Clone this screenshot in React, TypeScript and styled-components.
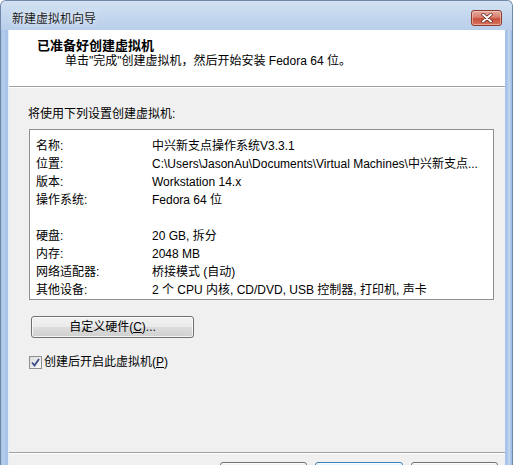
import React from "react";
import styled, { createGlobalStyle } from "styled-components";

const Global = createGlobalStyle`
  html, body { margin: 0; padding: 0; overflow: hidden; background: #fff; }
  body {
    font-family: "Liberation Sans", "Noto Sans CJK SC", sans-serif;
    font-size: 12px;
    color: #000;
  }
`;

const Window = styled.div`
  width: 513px;
  height: 465px;
  box-sizing: border-box;
  overflow: hidden;
  border: 1px solid #7088a8;
  border-bottom: none;
  border-radius: 6px 6px 0 0;
  background: linear-gradient(
    to right,
    #9db9e2 0,
    #b9cfec 2px,
    #a8c3e8 5px,
    #a8c3e8 calc(100% - 5px),
    #c3d7ef calc(100% - 3px),
    #9db9e2 100%
  );
`;

const TitleBar = styled.div`
  height: 29px;
  display: flex;
  align-items: flex-start;
  padding-left: 11px;
  background: linear-gradient(#d3e2f3, #c1d5ed 60%, #b9cfea);
`;

const TitleText = styled.div`
  padding-top: 9px;
  line-height: 18px;
  color: #1b1b1b;
  text-shadow: 0 0 6px rgba(255, 255, 255, 0.9);
`;

const CloseButton = styled.div`
  margin: 9px 10px 0 auto;
  width: 31px;
  height: 16px;
  box-sizing: border-box;
  border: 1px solid #8a3a2e;
  border-radius: 3px;
  display: flex;
  align-items: center;
  justify-content: center;
  background: linear-gradient(#e8ab9e, #d77f6e 45%, #c7503b 55%, #d9735f);
  box-shadow: inset 0 0 0 1px rgba(255, 220, 210, 0.5);
`;

const Client = styled.div`
  margin: 0 7px 0 7px;
  background: #f0f0f0;
  border-left: 1px solid #e6eef8;
`;

const Header = styled.div`
  height: 57px;
  box-sizing: border-box;
  background: #fff;
  padding: 8px 0 0 28px;
  border-bottom: 1px solid #a0a0a0;
  box-shadow: 0 1px 0 #fff;
`;

const HeaderTitle = styled.div`
  font-size: 13px;
  font-weight: bold;
  line-height: 16px;
`;

const HeaderSub = styled.div`
  margin: -1px 0 0 28px;
  line-height: 16px;
`;

const Body = styled.div`
  height: 365px;
  box-sizing: border-box;
  padding: 18px 0 0 19px;
`;

const Intro = styled.div`
  line-height: 18px;
`;

const ListBox = styled.div`
  margin: 6px 0 0 1px;
  width: 465px;
  height: 171px;
  box-sizing: border-box;
  border: 1px solid #8e8f8f;
  background: #fff;
  padding: 7px 0 0 6px;
  display: grid;
  grid-template-columns: 116px 1fr;
  grid-auto-rows: 18px;
  line-height: 18px;
  white-space: nowrap;
`;

const Spacer = styled.div`
  grid-column: 1 / span 2;
`;

const Button = styled.div<{ $default?: boolean; $width: number }>`
  width: ${(p) => p.$width}px;
  height: 22px;
  box-sizing: border-box;
  display: flex;
  align-items: center;
  justify-content: center;
  border: 1px solid ${(p) => (p.$default ? "#3c7fb1" : "#707070")};
  border-radius: 3px;
  background: ${(p) =>
    p.$default
      ? "linear-gradient(#eaf6fd, #d9f0fc 50%, #bee6fd 50%, #a7d9f5)"
      : "linear-gradient(#f2f2f2, #ebebeb 50%, #dddddd 50%, #cfcfcf)"};
  box-shadow: inset 0 0 0 1px rgba(255, 255, 255, 0.75);
  line-height: 18px;
`;

const CustomRow = styled.div`
  margin: 16px 0 0 3px;
`;

const CheckRow = styled.label`
  margin: 15px 0 0 1px;
  display: flex;
  align-items: center;
  gap: 2px;
  height: 18px;
  line-height: 18px;
`;

const CheckBox = styled.div`
  width: 13px;
  height: 13px;
  box-sizing: border-box;
  border: 1px solid #8e8f8f;
  background: linear-gradient(135deg, #dcdcdc, #fbfbfb);
  display: flex;
  align-items: center;
  justify-content: center;
`;

const Footer = styled.div`
  border-top: 1px solid #a0a0a0;
  box-shadow: inset 0 1px 0 #fff;
  padding: 9px 7px 0 0;
  display: flex;
  justify-content: flex-end;
  gap: 8px;
`;

const rows: ([string, string] | null)[] = [
  ["名称:", "中兴新支点操作系统V3.3.1"],
  ["位置:", "C:\\Users\\JasonAu\\Documents\\Virtual Machines\\中兴新支点..."],
  ["版本:", "Workstation 14.x"],
  ["操作系统:", "Fedora 64 位"],
  null,
  ["硬盘:", "20 GB, 拆分"],
  ["内存:", "2048 MB"],
  ["网络适配器:", "桥接模式 (自动)"],
  ["其他设备:", "2 个 CPU 内核, CD/DVD, USB 控制器, 打印机, 声卡"],
];

export default function App() {
  return (
    <>
      <Global />
      <Window>
        <TitleBar>
          <TitleText>新建虚拟机向导</TitleText>
          <CloseButton>
            <svg width="12" height="10" viewBox="0 0 12 10">
              <path d="M2 1.5 L10 8.5 M10 1.5 L2 8.5" stroke="#5a1e16" strokeWidth="3.4" strokeLinecap="round" />
              <path d="M2 1.5 L10 8.5 M10 1.5 L2 8.5" stroke="#fff" strokeWidth="2" strokeLinecap="round" />
            </svg>
          </CloseButton>
        </TitleBar>
        <Client>
          <Header>
            <HeaderTitle>已准备好创建虚拟机</HeaderTitle>
            <HeaderSub>单击"完成"创建虚拟机，然后开始安装 Fedora 64 位。</HeaderSub>
          </Header>
          <Body>
            <Intro>将使用下列设置创建虚拟机:</Intro>
            <ListBox>
              {rows.map((r, i) =>
                r ? (
                  <React.Fragment key={i}>
                    <div>{r[0]}</div>
                    <div>{r[1]}</div>
                  </React.Fragment>
                ) : (
                  <Spacer key={i} />
                )
              )}
            </ListBox>
            <CustomRow>
              <Button $width={163}>
                自定义硬件(<u>C</u>)...
              </Button>
            </CustomRow>
            <CheckRow>
              <CheckBox>
                <svg width="9" height="9" viewBox="0 0 9 9">
                  <path d="M1 4.5 L3.5 7.5 L8 1" fill="none" stroke="#3a4a86" strokeWidth="1.8" />
                </svg>
              </CheckBox>
              <span>
                创建后开启此虚拟机(<u>P</u>)
              </span>
            </CheckRow>
          </Body>
          <Footer>
            <Button $width={87} aria-label="上一步" />
            <Button $width={88} $default aria-label="完成" />
            <Button $width={87} aria-label="取消" />
          </Footer>
        </Client>
      </Window>
    </>
  );
}
